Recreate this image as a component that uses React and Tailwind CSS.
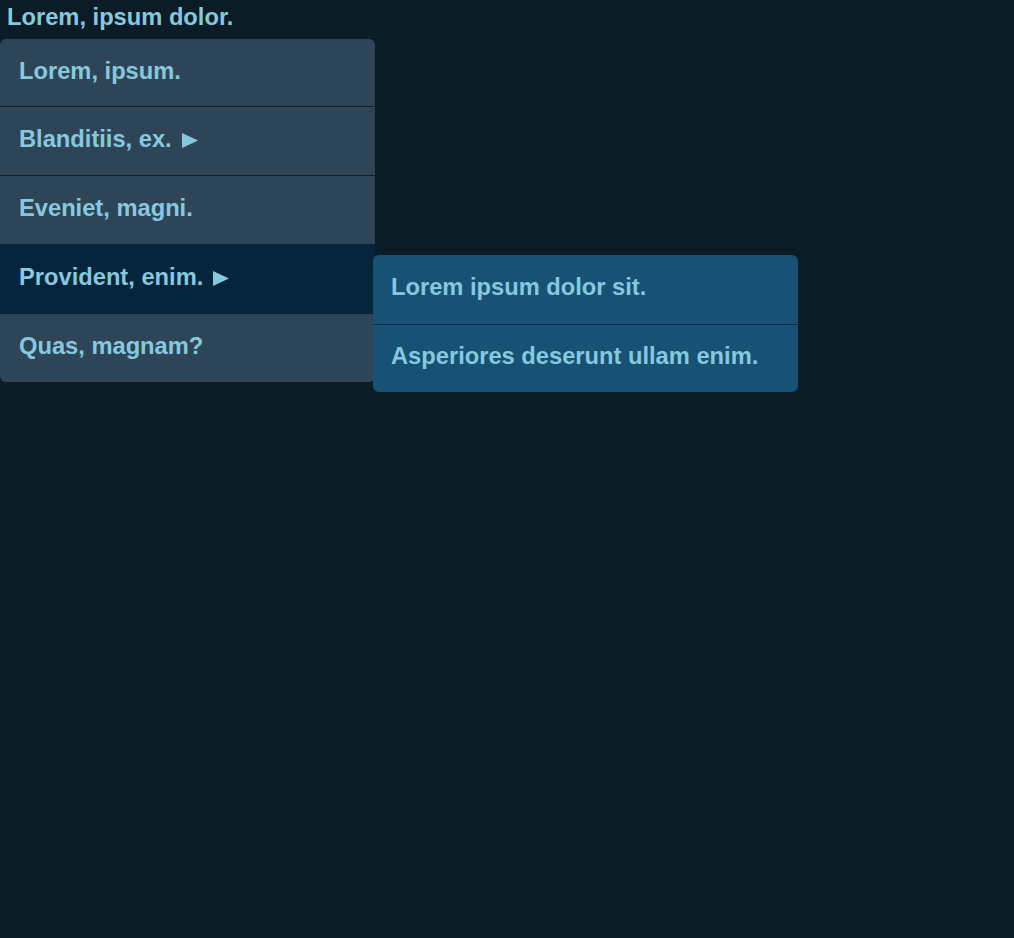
import { useState } from "react";

const ITEMS = [
  { label: "Lorem, ipsum.", h: "h-[68px] rounded-t-md" },
  { label: "Blanditiis, ex.", sub: true, h: "h-[69px]" },
  { label: "Eveniet, magni.", h: "h-[69px]" },
  { label: "Provident, enim.", sub: true, open: true, h: "h-[69px]" },
  { label: "Quas, magnam?", h: "h-[68px] rounded-b-md" },
];

const SUB_ITEMS = ["Lorem ipsum dolor sit.", "Asperiores deserunt ullam enim."];

function Arrow() {
  return (
    <svg width="16" height="15" viewBox="0 0 16 15" className="ml-[10px] mt-[1px] shrink-0">
      <polygon points="0,0 16,7.5 0,15" fill="currentColor" />
    </svg>
  );
}

export default function App() {
  const [active] = useState(3);

  return (
    <div className="min-h-[938px] bg-[#0b1c26] font-['Liberation_Sans',Arial,sans-serif] font-bold text-[#86c9df]">
      <h1 className="h-[39px] px-[7px] pt-[3px] text-[23.7px] leading-[28px]">
        Lorem, ipsum dolor.
      </h1>
      <ul className="w-[375px] rounded-md bg-[#2e4558]">
        {ITEMS.map((item, i) => (
          <li
            key={item.label}
            className={`relative flex items-center px-[19px] pb-[2px] text-[23.7px] ${item.h} ${
              i < ITEMS.length - 1 ? "border-b border-[#10212d]" : ""
            } ${i === active ? "bg-[#05253d]" : ""}`}
          >
            <span>{item.label}</span>
            {item.sub && <Arrow />}
            {item.open && i === active && (
              <ul className="absolute left-[373px] top-[10px] w-[425px] rounded-md bg-[#175174]">
                {SUB_ITEMS.map((s, j) => (
                  <li
                    key={s}
                    className={`flex h-[68.5px] items-center px-[18px] pb-[3px] text-[23.7px] ${
                      j > 0 ? "border-t border-[#0e2a3b]" : ""
                    }`}
                  >
                    {s}
                  </li>
                ))}
              </ul>
            )}
          </li>
        ))}
      </ul>
    </div>
  );
}
